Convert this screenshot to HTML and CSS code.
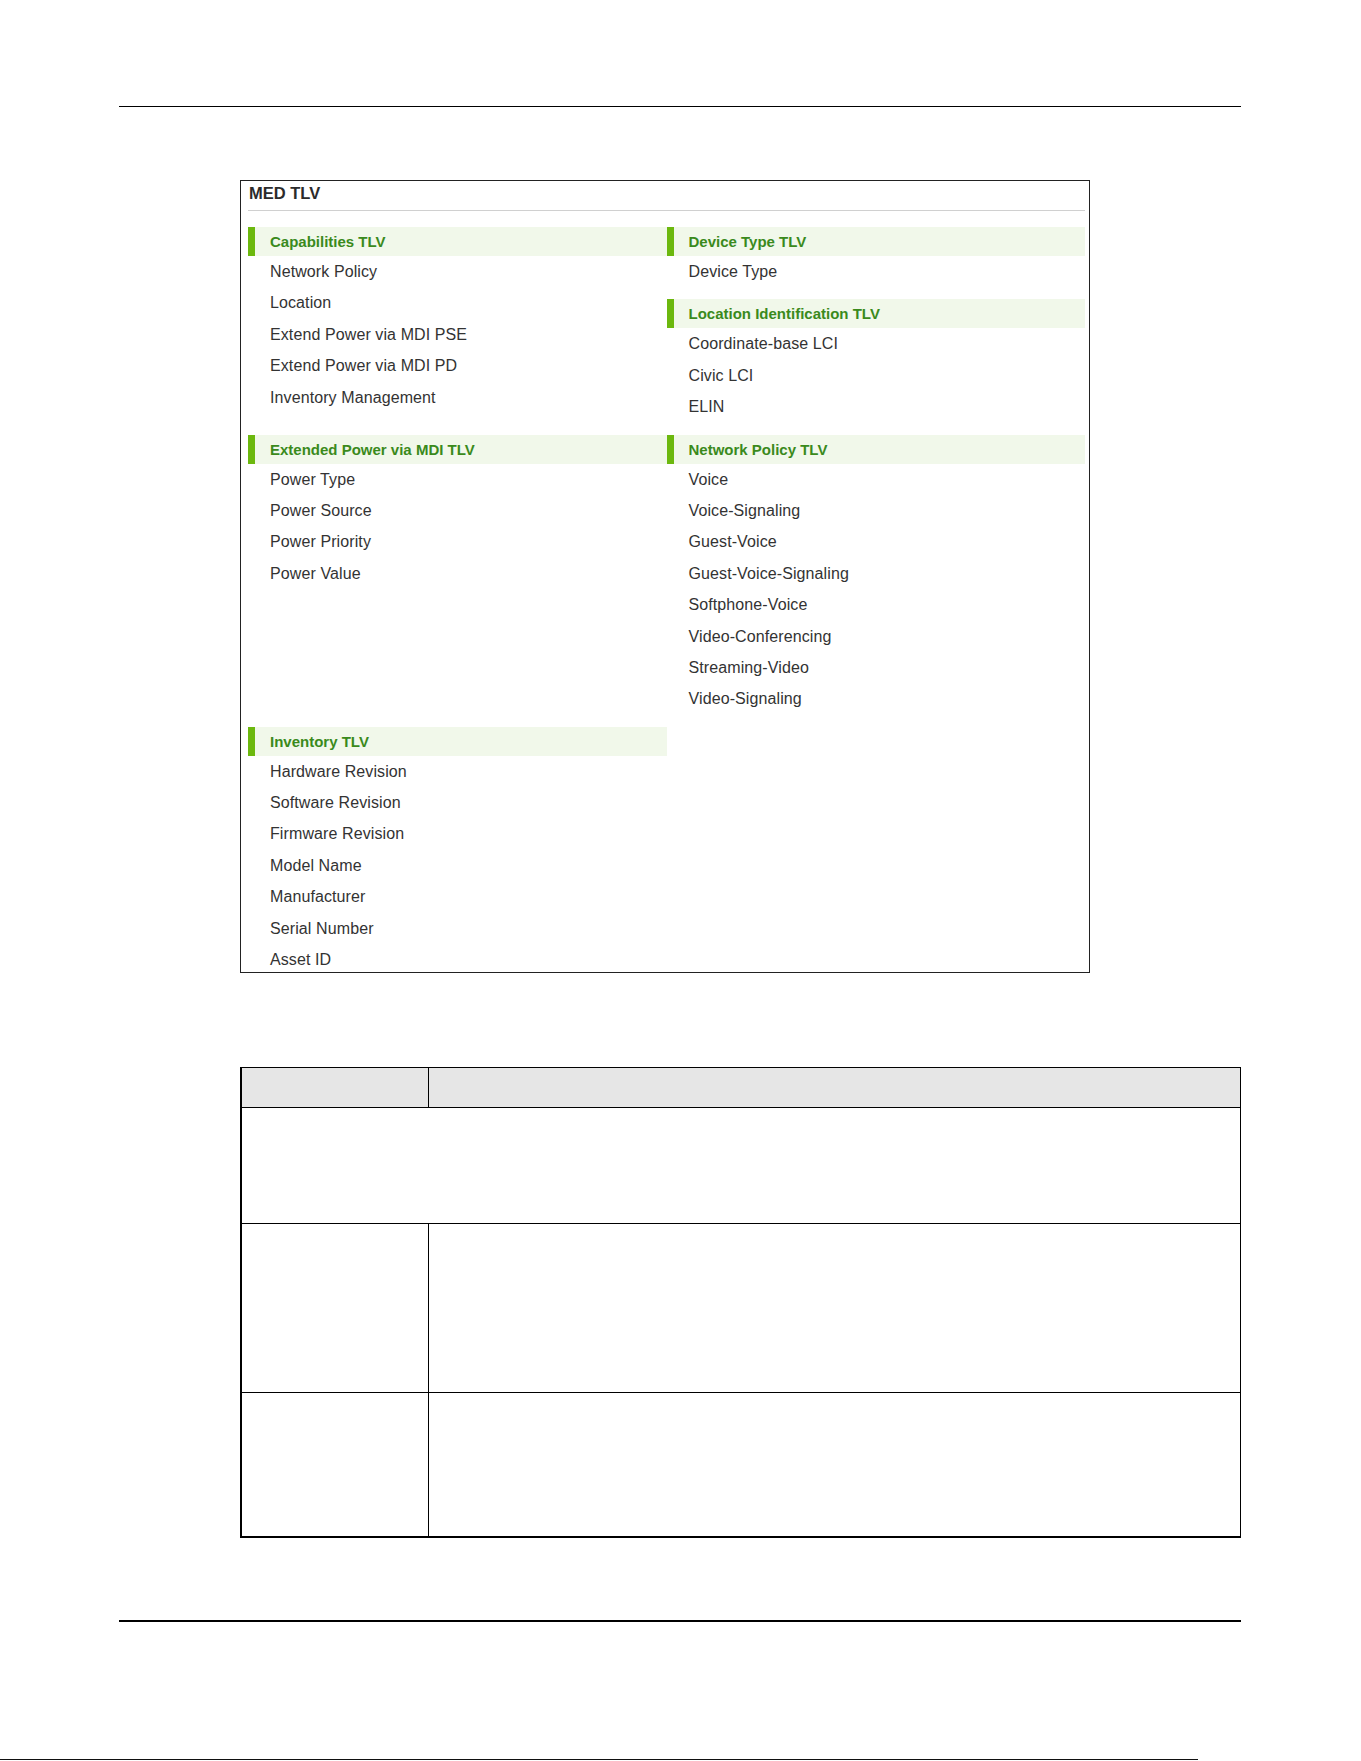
FILE: index.html
```html
<!DOCTYPE html>
<html lang="en">
<head>
    <meta charset="UTF-8">
    <meta name="viewport" content="width=device-width, initial-scale=1.0">
    <title>MED TLV</title>
    <link rel="stylesheet" href="styles.css">
</head>
<body>

    <div class="page">
        <div class="rule-top"></div>

        <!-- MED TLV settings panel -->
        <div class="panel">
            <div class="panel-title">MED TLV</div>
            <div class="tlv-grid">
                <div class="tlv-col">
                    <div class="tlv-section">
                        <div class="tlv-head">Capabilities TLV</div>
                        <div class="tlv-item">Network Policy</div>
                        <div class="tlv-item">Location</div>
                        <div class="tlv-item">Extend Power via MDI PSE</div>
                        <div class="tlv-item">Extend Power via MDI PD</div>
                        <div class="tlv-item">Inventory Management</div>
                    </div>
                </div>
                <div class="tlv-col">
                    <div class="tlv-section">
                        <div class="tlv-head">Device Type TLV</div>
                        <div class="tlv-item">Device Type</div>
                    </div>
                    <div class="tlv-section">
                        <div class="tlv-head">Location Identification TLV</div>
                        <div class="tlv-item">Coordinate-base LCI</div>
                        <div class="tlv-item">Civic LCI</div>
                        <div class="tlv-item">ELIN</div>
                    </div>
                </div>

                <div class="tlv-col">
                    <div class="tlv-section">
                        <div class="tlv-head">Extended Power via MDI TLV</div>
                        <div class="tlv-item">Power Type</div>
                        <div class="tlv-item">Power Source</div>
                        <div class="tlv-item">Power Priority</div>
                        <div class="tlv-item">Power Value</div>
                    </div>
                </div>
                <div class="tlv-col">
                    <div class="tlv-section">
                        <div class="tlv-head">Network Policy TLV</div>
                        <div class="tlv-item">Voice</div>
                        <div class="tlv-item">Voice-Signaling</div>
                        <div class="tlv-item">Guest-Voice</div>
                        <div class="tlv-item">Guest-Voice-Signaling</div>
                        <div class="tlv-item">Softphone-Voice</div>
                        <div class="tlv-item">Video-Conferencing</div>
                        <div class="tlv-item">Streaming-Video</div>
                        <div class="tlv-item">Video-Signaling</div>
                    </div>
                </div>

                <div class="tlv-col">
                    <div class="tlv-section">
                        <div class="tlv-head">Inventory TLV</div>
                        <div class="tlv-item">Hardware Revision</div>
                        <div class="tlv-item">Software Revision</div>
                        <div class="tlv-item">Firmware Revision</div>
                        <div class="tlv-item">Model Name</div>
                        <div class="tlv-item">Manufacturer</div>
                        <div class="tlv-item">Serial Number</div>
                        <div class="tlv-item">Asset ID</div>
                    </div>
                </div>
                <div class="tlv-col"></div>
            </div>
        </div>

        <!-- field description table -->
        <div class="spec">
            <div class="cell head name"></div>
            <div class="cell head"></div>
            <div class="cell wide row-1"></div>
            <div class="cell name row-2"></div>
            <div class="cell row-2"></div>
            <div class="cell name row-3 last"></div>
            <div class="cell row-3 last"></div>
        </div>

        <div class="rule-bottom"></div>
    </div>

    <div class="edge-line"></div>

</body>
</html>
```

FILE: styles.css
```css
html, body {
    margin: 0;
    padding: 0;
    background-color: #fff;
    font-family: 'Liberation Sans', Arial, sans-serif;
    color: #333;
}

.page {
    width: 1122px;
    margin-left: 119px;
}

.rule-top {
    margin-top: 106px;
    height: 1px;
    background-color: #000;
}

.rule-bottom {
    margin-top: 82px;
    height: 2px;
    background-color: #000;
}

.edge-line {
    margin-top: 137px;
    width: 1198px;
    height: 1px;
    background-color: #111;
}

/* panel */

.panel {
    box-sizing: border-box;
    margin: 73px 0 0 121px;
    width: 850px;
    height: 793px;
    padding: 0 4px 0 7px;
    border: 1px solid #222;
    overflow: hidden;
}

.panel-title {
    padding: 2px 0 7px 1px;
    line-height: 20px;
    font-size: 16.5px;
    font-weight: bold;
    color: #2b2b2b;
    border-bottom: 1px solid #d0d0d0;
}

.tlv-grid {
    display: grid;
    grid-template-columns: 1fr 1fr;
    margin-top: 16px;
}

.tlv-section {
    margin-bottom: 12px;
}

.tlv-head {
    height: 29px;
    line-height: 29px;
    padding-left: 15px;
    border-left: 7px solid #6cb80e;
    background-color: #f1f8ea;
    color: #3a8a1c;
    font-size: 15px;
    font-weight: bold;
}

.tlv-item {
    height: 31.4px;
    line-height: 31.4px;
    padding-left: 22px;
    font-size: 16px;
    letter-spacing: 0.1px;
    color: #333;
    white-space: nowrap;
}

/* description table */

.spec {
    display: grid;
    grid-template-columns: 187px 1fr;
    margin: 94px 0 0 121px;
    width: 1001px;
    box-sizing: border-box;
    border: 1px solid #000;
    border-left-width: 2px;
    border-bottom-width: 2px;
}

.cell {
    box-sizing: border-box;
    border-bottom: 1px solid #000;
}

.cell.name {
    border-right: 1px solid #000;
}

.cell.head {
    height: 40px;
    background-color: #e6e6e6;
}

.cell.wide {
    grid-column: 1 / 3;
}

.row-1 {
    height: 116px;
}

.row-2 {
    height: 169px;
}

.row-3 {
    height: 143px;
}

.cell.last {
    border-bottom: none;
}
```
